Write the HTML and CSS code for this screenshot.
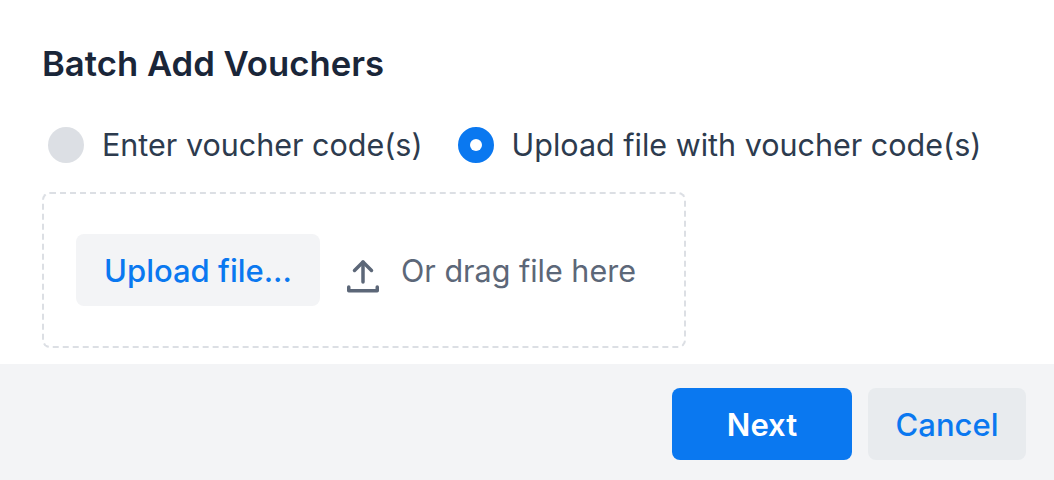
FILE: index.html
```html
<!DOCTYPE html>
<html lang="en">
<head>
    <meta charset="UTF-8">
    <title>Batch Add Vouchers</title>
    <link rel="stylesheet" href="styles.css">
</head>
<body>
    <div class="dialog">
        <div class="content">
            <h1>Batch Add Vouchers</h1>
            <div class="options">
                <label class="option"><span class="radio"></span>Enter voucher code(s)</label>
                <label class="option"><span class="radio checked"></span>Upload file with voucher code(s)</label>
            </div>
            <div class="dropzone">
                <button class="upload-button">Upload file...</button>
                <svg class="upload-icon" width="36" height="48" viewBox="0 0 36 48" fill="none" stroke="#5c6778" stroke-width="3.500" stroke-linecap="round" stroke-linejoin="round">
                    <path d="M17 36V16"/>
                    <path d="M8.500 24.500L17 16l8.500 8.500"/>
                    <path d="M2.750 41v3.750h28.500V41"/>
                </svg>
                <span class="drop-text">Or drag file here</span>
            </div>
        </div>
        <div class="footer">
            <button class="btn btn-primary">Next</button>
            <button class="btn btn-secondary">Cancel</button>
        </div>
    </div>
</body>
</html>
```

FILE: styles.css
```css
* {
    box-sizing: border-box;
}

body {
    margin: 0;
    background-color: #fff;
    font-family: 'Inter', 'Liberation Sans', sans-serif;
}

.dialog {
    width: 1054px;
    height: 480px;
    display: flex;
    flex-direction: column;
}

.content {
    height: 364px;
    padding: 43px 42px 0;
}

h1 {
    margin: 0;
    font-size: 34.7px;
    line-height: 40px;
    font-weight: 600;
    color: #1a2639;
}

.options {
    display: flex;
    gap: 35px;
    margin-top: 40px;
    padding-left: 6px;
}

.option {
    display: flex;
    align-items: center;
    gap: 18px;
    font-size: 30.5px;
    line-height: 44px;
    color: #2d3b4e;
}

.radio {
    width: 36px;
    height: 36px;
    border-radius: 50%;
    background-color: #dcdfe4;
}

.radio.checked {
    background-color: #0a78f0;
    border: 12px solid #0a78f0;
}

.radio.checked::after {
    content: '';
    display: block;
    width: 12px;
    height: 12px;
    border-radius: 50%;
    background-color: #fff;
}

.dropzone {
    display: flex;
    align-items: center;
    width: 644px;
    height: 156px;
    margin-top: 25px;
    padding: 0 32px;
    border: 2px dashed #dcdfe4;
    border-radius: 8px;
}

.upload-button {
    width: 244px;
    height: 72px;
    border: none;
    border-radius: 8px;
    background-color: #f3f4f6;
    color: #0a78f0;
    font-family: inherit;
    font-size: 31px;
    font-weight: 500;
}

.upload-icon {
    margin-left: 26px;
    flex-shrink: 0;
}

.drop-text {
    margin-left: 19px;
    font-size: 30.5px;
    color: #5c6778;
}

.footer {
    display: flex;
    justify-content: flex-end;
    gap: 16px;
    height: 116px;
    padding: 24px 28px 20px;
    background-color: #f3f4f6;
}

.btn {
    height: 72px;
    border: none;
    border-radius: 8px;
    font-family: inherit;
    font-size: 31px;
    font-weight: 500;
}

.btn-primary {
    width: 180px;
    background-color: #0a78f0;
    color: #fff;
    font-weight: 600;
}

.btn-secondary {
    width: 158px;
    background-color: #e8ebee;
    color: #0a78f0;
}
```
